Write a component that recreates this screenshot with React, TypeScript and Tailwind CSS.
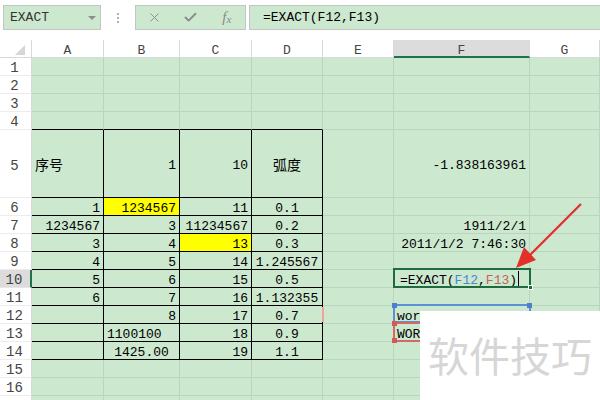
import React from 'react';
import { X, Check } from 'lucide-react';

type Cell = { t?: React.ReactNode; a?: 'l' | 'r' | 'c'; y?: boolean; cjk?: boolean };

const colW = ['w-[72px]', 'w-[76px]', 'w-[72px]', 'w-[71px]', 'w-[71px]', 'w-[136px]', 'flex-1'];
const letters = ['A', 'B', 'C', 'D', 'E', 'F', 'G'];

const r = (t: string, y?: boolean): Cell => ({ t, a: 'r', y });
const c = (t: string): Cell => ({ t, a: 'c' });
const l = (t: string): Cell => ({ t, a: 'l' });
const e: Cell = {};

// contents of the sheet, row by row (A..G)
const rows: { n: number; cells: Cell[] }[] = [
  { n: 1, cells: [] },
  { n: 2, cells: [] },
  { n: 3, cells: [] },
  { n: 4, cells: [] },
  { n: 5, cells: [{ t: '序号', a: 'l', cjk: true }, r('1'), r('10'), { t: '弧度', a: 'c', cjk: true }, e, r('-1.838163961')] },
  { n: 6, cells: [r('1'), r('1234567', true), r('11'), c('0.1')] },
  { n: 7, cells: [r('1234567'), r('3'), r('11234567'), c('0.2'), e, r('1911/2/1')] },
  { n: 8, cells: [r('3'), r('4'), r('13', true), c('0.3'), e, r('2011/1/2 7:46:30')] },
  { n: 9, cells: [r('4'), r('5'), r('14'), c('1.245567')] },
  { n: 10, cells: [r('5'), r('6'), r('15'), c('0.5')] },
  { n: 11, cells: [r('6'), r('7'), r('16'), c('1.132355')] },
  { n: 12, cells: [e, r('8'), r('17'), c('0.7'), e, l('wor')] },
  { n: 13, cells: [e, l('1100100'), r('18'), c('0.9'), e, l('WOR')] },
  { n: 14, cells: [e, c('1425.00'), r('19'), c('1.1')] },
  { n: 15, cells: [] },
  { n: 16, cells: [] },
  { n: 17, cells: [] },
];

function Corner({ color, pos }: { color: string; pos: string }) {
  return <span className={`absolute h-[5px] w-[5px] ${color} ${pos}`} />;
}

function SheetCell({ cell, col, row }: { cell: Cell; col: number; row: number }) {
  const inTable = row >= 5 && row <= 14 && col <= 3;
  const tableTop = row === 4 && col <= 3;
  const border = inTable
    ? 'border-r border-b border-black'
    : tableTop
      ? 'border-r border-b border-r-[#bad5be] border-b-black'
      : 'border-r border-b border-[#bad5be]';
  const align =
    cell.a === 'r' ? 'justify-end pr-[3px]' : cell.a === 'c' ? 'justify-center' : 'justify-start pl-[3px]';
  const vert = row === 5 ? 'items-center pt-[4px]' : 'items-start pt-[2px]';
  const bg = cell.y ? 'bg-[#ffff00]' : '';
  const selected = row === 10 && col === 5;
  const rangeA = row === 12 && col === 5;
  const rangeB = row === 13 && col === 5;
  const mark = row === 12 && col === 3;

  return (
    <div
      className={`${colW[col]} ${border} ${bg} ${align} ${vert} flex h-full whitespace-nowrap ${
        selected || rangeA || rangeB || mark ? 'relative' : ''
      }`}
    >
      {selected ? (
        <>
          <span className="leading-[18px] pl-[3px]">
            =EXACT(<span className="text-[#4f86cf]">F12</span>,<span className="text-[#c2655c]">F13</span>)
          </span>
          <span className="absolute left-[124px] top-[1px] h-[15px] w-px bg-black" />
          <span className="absolute -left-px -top-[2px] -right-[2px] -bottom-px border-2 border-[#1f6b3f]" />
          <span className="absolute -right-[4px] -bottom-[3px] h-[5px] w-[5px] border border-white bg-[#1f6b3f]" />
        </>
      ) : (
        <span className={`${cell.cjk ? 'text-[14px]' : ''} leading-[18px]`}>{cell.t}</span>
      )}
      {rangeA && (
        <span className="absolute -left-px -top-[2px] -right-[2px] bottom-0 border-2 border-[#5b8fd6]">
          <Corner color="bg-[#4b7fcf]" pos="-left-[3px] -top-[3px]" />
          <Corner color="bg-[#4b7fcf]" pos="-right-[3px] -top-[3px]" />
        </span>
      )}
      {rangeB && (
        <span className="absolute -left-px -top-[2px] -right-[2px] -bottom-px border-2 border-[#d06a64]">
          <Corner color="bg-[#d45a58]" pos="-left-[3px] -top-[3px]" />
          <Corner color="bg-[#d45a58]" pos="-left-[3px] -bottom-[3px]" />
        </span>
      )}
      {mark && <span className="absolute -right-[2px] top-[1px] h-[15px] w-[2px] bg-[#f2a49c]" />}
    </div>
  );
}

export default function App() {
  return (
    <div className="relative h-[400px] w-[600px] overflow-hidden bg-white text-[13px] text-black font-['Liberation_Mono','Noto_Sans_CJK_SC',monospace]">
      {/* formula bar */}
      <div className="flex h-[40px] items-start pt-[5px]">
        <div className="ml-[3px] flex h-[25px] w-[98px] items-center justify-between border border-[#c4c4c4] bg-[#cce8cf] pl-[6px] pr-[4px] text-[#333]">
          <span>EXACT</span>
          <span className="h-0 w-0 border-x-[4px] border-t-[4px] border-x-transparent border-t-[#8e8e8e]" />
        </div>
        <div className="flex h-[25px] w-[34px] flex-col items-center justify-center gap-[2px]">
          <span className="h-[2px] w-[2px] bg-[#b0b0b0]" />
          <span className="h-[2px] w-[2px] bg-[#b0b0b0]" />
          <span className="h-[2px] w-[2px] bg-[#b0b0b0]" />
        </div>
        <div className="flex h-[25px] w-[111px] items-center border border-[#c4c4c4] bg-[#cce8cf] text-[#8a8a8a]">
          <div className="flex flex-1 justify-center">
            <X size={15} strokeWidth={1.5} />
          </div>
          <div className="flex flex-1 justify-center">
            <Check size={15} strokeWidth={3} />
          </div>
          <div className="flex flex-1 justify-center font-['Liberation_Serif',serif] italic">
            <span className="text-[15px] leading-none">f</span>
            <span className="mt-[4px] text-[11px] leading-none">x</span>
          </div>
        </div>
        <div className="ml-[3px] -mr-[2px] flex h-[25px] flex-1 items-center border border-[#c4c4c4] bg-[#cce8cf] pl-[13px]">
          =EXACT(F12,F13)
        </div>
      </div>

      {/* column headers */}
      <div className="flex h-[18px] bg-white text-[#444]">
        <div className="flex w-[32px] items-end justify-end border-r border-b border-[#d8d8d8] pb-[2px] pr-[6px]">
          <span className="h-0 w-0 border-l-[10px] border-b-[10px] border-l-transparent border-b-[#d6d6d6]" />
        </div>
        {letters.map((ch, i) => (
          <div
            key={ch}
            className={`${colW[i]} flex justify-center pt-[2px] ${
              ch === 'F'
                ? 'border-r border-b-2 border-r-[#d8d8d8] border-b-[#217346] bg-[#dcdcdc]'
                : 'border-r border-b border-[#d8d8d8]'
            }`}
          >
            <span className="leading-[18px]">{ch}</span>
          </div>
        ))}
      </div>

      {/* rows */}
      <div className="flex flex-col bg-[#cce8cf]">
        {rows.map((row) => (
          <div key={row.n} className={`flex ${row.n === 5 ? 'h-[68px]' : 'h-[18px]'}`}>
            <div
              className={`flex w-[32px] justify-center pr-[2px] text-[14px] text-[#444] ${
                row.n === 5 ? 'items-center pt-[4px]' : 'items-start pt-px'
              } ${
                row.n === 10
                  ? 'border-r-2 border-b border-r-[#217346] border-b-[#e6e6e6] bg-[#dcdcdc]'
                  : 'border-r border-b border-r-[#d8d8d8] border-b-[#ececec] bg-white'
              }`}
            >
              {row.n < 17 && <span className="leading-[18px]">{row.n}</span>}
            </div>
            {letters.map((_, i) => (
              <SheetCell key={i} cell={row.cells[i] ?? e} col={i} row={row.n} />
            ))}
          </div>
        ))}
      </div>

      {/* watermark */}
      <div className="absolute left-[420px] top-[311px] flex h-[89px] w-[180px] items-center bg-white pb-[3px] pl-[8px]">
        <span className="font-['Noto_Sans_CJK_SC',sans-serif] text-[41px] leading-none text-[#d6d6d6]">软件技巧</span>
      </div>

      {/* red arrow */}
      <svg className="absolute left-0 top-0" width="600" height="400" viewBox="0 0 600 400">
        <line x1="581" y1="204" x2="527" y2="258" stroke="#e3302b" strokeWidth="2.2" />
        <polygon points="516,268 536,260 524,247" fill="#e3302b" />
      </svg>
    </div>
  );
}
